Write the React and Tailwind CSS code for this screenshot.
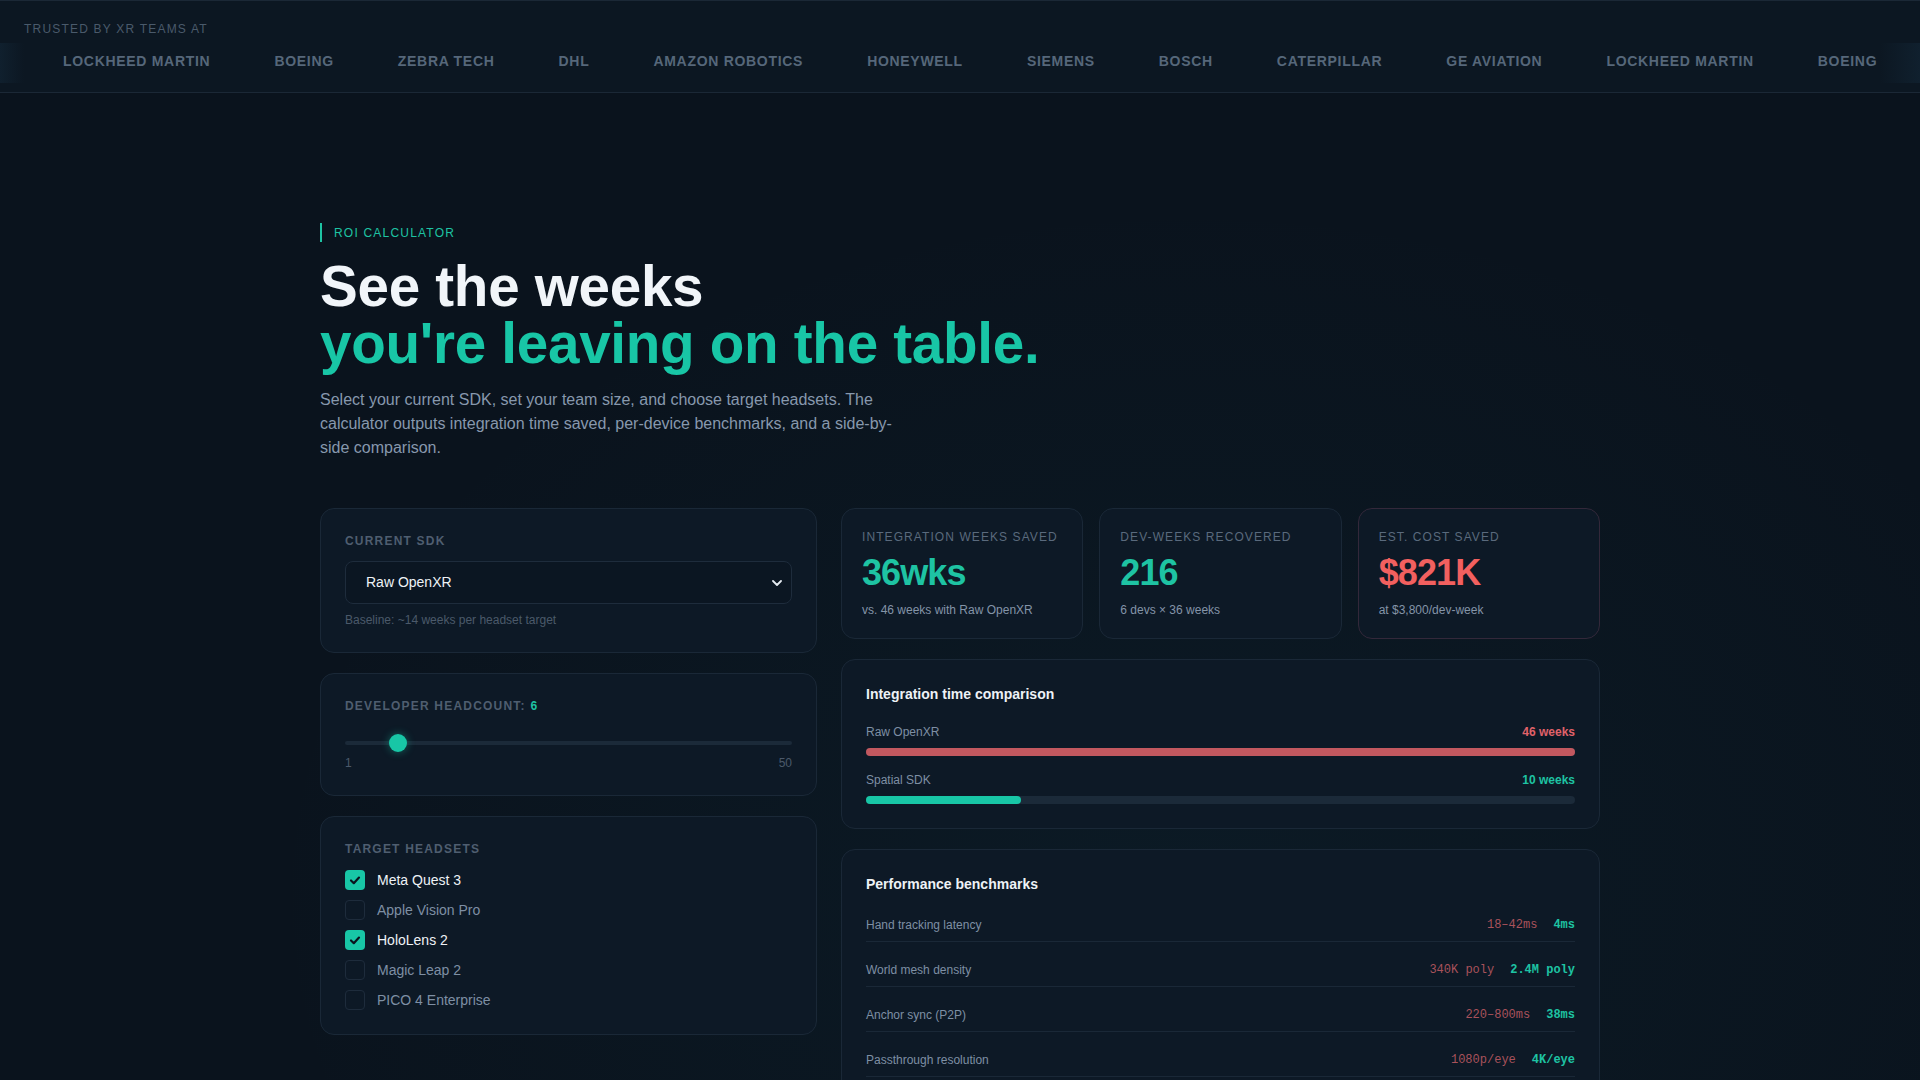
import React, { useState } from "react";

const logos = [
  "LOCKHEED MARTIN",
  "BOEING",
  "ZEBRA TECH",
  "DHL",
  "AMAZON ROBOTICS",
  "HONEYWELL",
  "SIEMENS",
  "BOSCH",
  "CATERPILLAR",
  "GE AVIATION",
];

const headsetList = [
  { name: "Meta Quest 3", on: true },
  { name: "Apple Vision Pro", on: false },
  { name: "HoloLens 2", on: true },
  { name: "Magic Leap 2", on: false },
  { name: "PICO 4 Enterprise", on: false },
];

const benchmarks = [
  { label: "Hand tracking latency", before: "18–42ms", after: "4ms" },
  { label: "World mesh density", before: "340K poly", after: "2.4M poly" },
  { label: "Anchor sync (P2P)", before: "220–800ms", after: "38ms" },
  { label: "Passthrough resolution", before: "1080p/eye", after: "4K/eye" },
  { label: "Cold start to first frame", before: "6.2s", after: "1.1s" },
];

const Check = () => (
  <svg viewBox="0 0 20 20" className="h-5 w-5">
    <polyline
      points="6,10.5 8.8,13.2 14,7.6"
      fill="none"
      stroke="#0a131d"
      strokeWidth="2.2"
      strokeLinecap="round"
      strokeLinejoin="round"
    />
  </svg>
);

const StatCard = ({ label, value, sub, tone }) => (
  <div
    className={
      tone === "red"
        ? "rounded-[14px] border border-[#33283a] bg-[#0d1926] p-5"
        : "rounded-[14px] border border-[#1a2837] bg-[#0d1926] p-5"
    }
  >
    <p className="text-[12px] leading-4 tracking-[0.09em] text-[#5a6a7d]">{label}</p>
    <p
      className={
        tone === "red"
          ? "mt-[10px] text-[36px] leading-none font-bold tracking-tight text-[#f2605f]"
          : "mt-[10px] text-[36px] leading-none font-bold tracking-tight text-[#1ec3a3]"
      }
    >
      {value}
    </p>
    <p className="mt-[11px] text-[12px] leading-4 text-[#8494a8]">{sub}</p>
  </div>
);

const App = () => {
  const [sdk, setSdk] = useState("Raw OpenXR");
  const [devs, setDevs] = useState(6);
  const [headsets, setHeadsets] = useState(headsetList);

  // thumb travels across the track minus its own 18px width
  const thumbLeft = ((devs - 1) / 49) * (448 - 18);

  const toggle = (name) => {
    setHeadsets(headsets.map((h) => (h.name === name ? { ...h, on: !h.on } : h)));
  };

  return (
    <div className="min-h-screen bg-[#0a131d] bg-[radial-gradient(ellipse_at_62%_72%,rgba(30,120,140,0.07),transparent_55%)] font-['Liberation_Sans',Arial,sans-serif] text-[#e5ebf1]">
      {/* Logo strip */}
      <header className="relative overflow-hidden border-t border-b border-[#1b2836] bg-[#0c1722] pt-5 pb-[21px]">
        <p className="px-6 text-[12px] leading-4 tracking-[0.1em] text-[#4a5a6b]">TRUSTED BY XR TEAMS AT</p>
        <div className="mt-[14px] flex gap-16 whitespace-nowrap pl-[63px]">
          {[...logos, ...logos].map((name, i) => (
            <span key={i} className="text-[14px] leading-5 font-bold tracking-wider text-[#56677a]">
              {name}
            </span>
          ))}
        </div>
        <div className="absolute left-0 top-[42px] h-[40px] w-[24px] bg-gradient-to-r from-[#10202e] to-transparent" />
        <div className="absolute right-0 top-[42px] h-[40px] w-[40px] bg-gradient-to-l from-[#10202e] to-transparent" />
      </header>

      <main className="mx-auto max-w-[1280px] pt-[130px] pb-24">
        {/* Hero */}
        <div className="flex h-[19px] items-center border-l-2 border-[#1ec3a3] pl-3">
          <span className="text-[12px] leading-4 tracking-[0.1em] text-[#1ec3a3]">ROI CALCULATOR</span>
        </div>
        <h1 className="mt-4 text-[56.6px] leading-[57px] font-bold tracking-[-0.005em]">
          <span className="block text-[#f1f5f9]">See the weeks</span>
          <span className="block text-[#18c6a6]">you're leaving on the table.</span>
        </h1>
        <p className="mt-4 max-w-[580px] text-[16px] leading-6 text-[#8798ad]">
          Select your current SDK, set your team size, and choose target headsets. The calculator outputs
          integration time saved, per-device benchmarks, and a side-by-side comparison.
        </p>

        <div className="mt-12 grid grid-cols-[497px_1fr] items-start gap-6">
          {/* Inputs */}
          <div className="flex flex-col gap-5">
            <section className="rounded-[14px] border border-[#1a2837] bg-[#0d1926] p-6">
              <p className="text-[12px] leading-4 font-bold tracking-[0.1em] text-[#4f5e70]">CURRENT SDK</p>
              <div className="relative mt-3">
                <select
                  value={sdk}
                  onChange={(e) => setSdk(e.target.value)}
                  className="h-[43px] w-full appearance-none rounded-lg border border-[#1e2c3c] bg-[#0b1622] pl-5 text-[14px] text-[#eef2f6] outline-none"
                >
                  <option>Raw OpenXR</option>
                  <option>Unity XR Toolkit</option>
                  <option>Unreal OpenXR</option>
                  <option>WebXR</option>
                </select>
                <svg viewBox="0 0 10 6" className="pointer-events-none absolute top-[19px] right-[10px] h-[6px] w-[10px]">
                  <path d="M1 1l4 4 4-4" fill="none" stroke="#e5ebf1" strokeWidth="1.8" strokeLinecap="round" strokeLinejoin="round" />
                </svg>
              </div>
              <p className="mt-2 text-[12px] leading-4 text-[#4b596a]">Baseline: ~14 weeks per headset target</p>
            </section>

            <section className="rounded-[14px] border border-[#1a2837] bg-[#0d1926] p-6">
              <p className="text-[12px] leading-4 font-bold tracking-[0.1em] text-[#4f5e70]">
                DEVELOPER HEADCOUNT:{" "}
                <span className="font-['Liberation_Mono',monospace] text-[#1ec3a3]">{devs}</span>
              </p>
              <div className="relative mt-4 h-6">
                <div className="absolute top-[10px] left-0 h-1 w-full rounded-full bg-[#1b2a39]" />
                <div
                  className="absolute top-[3px] h-[18px] w-[18px] rounded-full bg-[#18c6a6] shadow-[0_0_8px_rgba(24,198,166,0.45)]"
                  style={{ left: thumbLeft }}
                />
                <input
                  type="range"
                  min="1"
                  max="50"
                  value={devs}
                  onChange={(e) => setDevs(Number(e.target.value))}
                  className="absolute inset-0 h-6 w-full cursor-pointer opacity-0"
                />
              </div>
              <div className="flex justify-between text-[12px] leading-4 text-[#4b596a]">
                <span>1</span>
                <span>50</span>
              </div>
            </section>

            <section className="rounded-[14px] border border-[#1a2837] bg-[#0d1926] p-6">
              <p className="text-[12px] leading-4 font-bold tracking-[0.1em] text-[#4f5e70]">TARGET HEADSETS</p>
              <div className="mt-[13px] flex flex-col gap-[10px]">
                {headsets.map((h) => (
                  <label key={h.name} className="flex h-5 cursor-pointer items-center gap-3" onClick={() => toggle(h.name)}>
                    {h.on ? (
                      <span className="flex h-5 w-5 items-center justify-center rounded-[4px] bg-[#18c6a6]">
                        <Check />
                      </span>
                    ) : (
                      <span className="h-5 w-5 rounded-[4px] border border-[#1e2c3c]" />
                    )}
                    <span className={h.on ? "text-[14px] text-[#eef2f6]" : "text-[14px] text-[#7e8fa4]"}>{h.name}</span>
                  </label>
                ))}
              </div>
            </section>
          </div>

          {/* Results */}
          <div className="flex flex-col gap-5">
            <div className="grid grid-cols-3 gap-4">
              <StatCard label="INTEGRATION WEEKS SAVED" value="36wks" sub={`vs. 46 weeks with ${sdk}`} />
              <StatCard label="DEV-WEEKS RECOVERED" value="216" sub={`${devs} devs × 36 weeks`} />
              <StatCard label="EST. COST SAVED" value="$821K" sub="at $3,800/dev-week" tone="red" />
            </div>

            <section className="rounded-[14px] border border-[#1a2837] bg-[#0d1926] p-6">
              <h3 className="text-[14px] leading-5 font-bold text-[#eef2f6]">Integration time comparison</h3>
              <div className="mt-5">
                <div className="flex justify-between text-[12px] leading-4">
                  <span className="text-[#7e8fa4]">{sdk}</span>
                  <span className="font-bold text-[#e0626a]">46 weeks</span>
                </div>
                <div className="mt-2 h-2 w-full rounded-full bg-[#1b2a39]">
                  <div className="h-2 w-full rounded-full bg-[#c2585f]" />
                </div>
              </div>
              <div className="mt-4">
                <div className="flex justify-between text-[12px] leading-4">
                  <span className="text-[#7e8fa4]">Spatial SDK</span>
                  <span className="font-bold text-[#1ec3a3]">10 weeks</span>
                </div>
                <div className="mt-2 h-2 w-full rounded-full bg-[#1b2a39]">
                  <div className="h-2 w-[21.8%] rounded-full bg-[#18c6a6]" />
                </div>
              </div>
            </section>

            <section className="rounded-[14px] border border-[#1a2837] bg-[#0d1926] p-6">
              <h3 className="mb-[23px] text-[14px] leading-5 font-bold text-[#eef2f6]">Performance benchmarks</h3>
              <div className="flex flex-col gap-5">
                {benchmarks.map((b) => (
                  <div key={b.label} className="flex items-center justify-between border-b border-[#1a2837] pb-2 text-[12px] leading-4">
                    <span className="text-[#7e8fa4]">{b.label}</span>
                    <span className="flex gap-4 font-['Liberation_Mono',monospace]">
                      <span className="text-[#a9525b]">{b.before}</span>
                      <span className="font-bold text-[#1ec3a3]">{b.after}</span>
                    </span>
                  </div>
                ))}
              </div>
            </section>
          </div>
        </div>
      </main>
    </div>
  );
};

export default App;
